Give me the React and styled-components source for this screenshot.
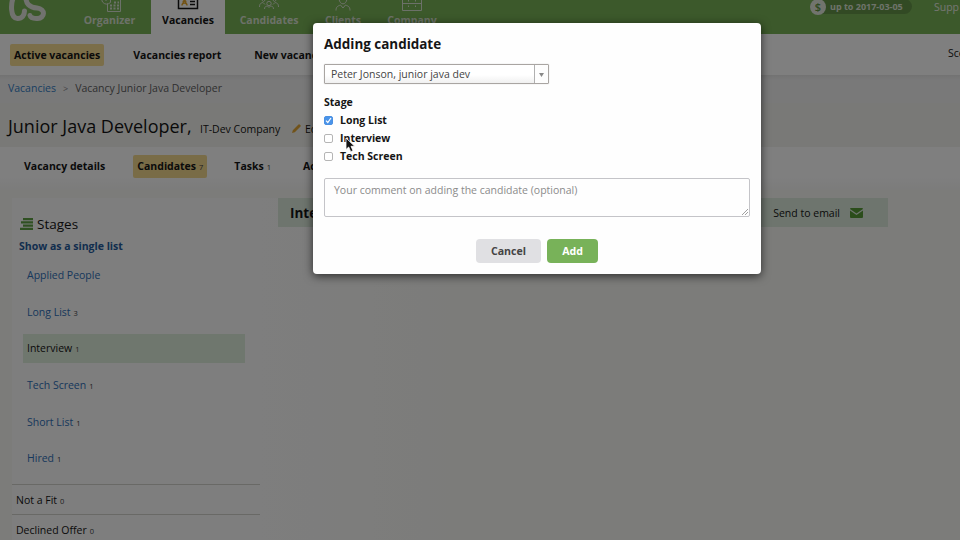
import React from 'react';
import styled, { createGlobalStyle } from 'styled-components';

const Global = createGlobalStyle`
  * { box-sizing: border-box; }
  html, body { margin: 0; padding: 0; }
  body {
    width: 960px; height: 540px; overflow: hidden;
    font-family: "Open Sans", "Noto Sans", sans-serif;
    font-size: 10.5px; color: #151515; background: #f8f8f4;
  }
`;

const Page = styled.div`
  position: relative; width: 960px; height: 540px; overflow: hidden;
  display: flex; flex-direction: column; white-space: nowrap;
`;

const Header = styled.header`
  display: flex; flex: none; height: 34px; background: #79b356; color: #e9ece4;
`;
const Logo = styled.svg`
  flex: none; width: 68px; height: 34px;
`;
const Tab = styled.div`
  flex: none; display: flex; flex-direction: column; align-items: center;
  width: ${p => p.$w}px; height: 34px; font-weight: 700; line-height: 16px;
  background: ${p => (p.$active ? '#ffffff' : 'transparent')};
  color: ${p => (p.$active ? '#151515' : '#d9e2d2')};
  & > svg { display: block; flex: none; width: 24px; height: 12px; overflow: hidden; }
`;
const Paid = styled.div`
  display: flex; align-items: center; align-self: flex-start; height: 15px;
  width: 102px; margin: -1px 0 0 359px; border-radius: 8px;
  background: #659549; color: #dde5d6; font-size: 9px; font-weight: 700; gap: 4px;
`;
const Coin = styled.span`
  width: 16px; height: 16px; border-radius: 50%; background: #e2e8dd; color: #5d923f;
  font-size: 11px; font-weight: 600; line-height: 16px; text-align: center;
`;
const Support = styled.span`
  margin-left: 22px; line-height: 14px;
`;

const SubNav = styled.nav`
  display: flex; flex: none; align-items: center; height: 41px; padding-left: 10px;
  background: #ffffff; font-weight: 700;
`;
const SubItem = styled.span`
  height: 22px; line-height: 22px; padding: 0 4px; margin-right: ${p => p.$gap || 0}px;
  border-radius: 2px; background: ${p => (p.$active ? '#f6dc93' : 'transparent')};
`;
const SubLink = styled.span`
  margin: -3px -5px 0 auto; font-weight: 400;
`;
const Crumbs = styled.div`
  display: flex; flex: none; height: 28px; padding: 0 0 0 8px; line-height: 27px;
  background: linear-gradient(#e6e6e6, #f2f2f3 5px); color: #5f5f5f; gap: 7px;
`;
const Link = styled.a`
  color: #357fc4;
`;
const Angle = styled.span`
  font-size: 9px; color: #8a8a8a;
`;
const TitleBar = styled.div`
  display: flex; flex: none; align-items: baseline; height: 44px; padding-left: 8px;
  background: #f3f3ee; line-height: 46px;
`;
const Title = styled.h1`
  margin: 0; font-size: 18px; font-weight: 400; width: 192px; line-height: 46px;
`;
const Company = styled.span`
  width: 92px;
`;
const Edit = styled.span`
  display: flex; align-items: center; gap: 4px;
  & > svg { width: 9px; height: 9px; }
`;
const Tabs = styled.div`
  display: flex; flex: none; align-items: center; height: 43px; padding: 0 0 4px 20px;
  background: linear-gradient(#fefeff 70%, #f8f8f6);
`;
const DetailTab = styled.span`
  height: 23px; line-height: 23px; padding: 0 4px; font-weight: 700; border-radius: 2px;
  margin-right: ${p => p.$gap}px;
  background: ${p => (p.$active ? '#f3d98f' : 'transparent')};
`;
const Count = styled.small`
  margin-left: 3px; font-size: 7.5px; font-weight: 400; color: #3c3c3c;
`;

const Body = styled.div`
  display: flex; flex: 1; padding: 8px 0 0 12px;
`;
const Side = styled.aside`
  width: 248px; padding-top: 16px; background: #fcfcfc;
`;
const SideTitle = styled.h2`
  display: flex; align-items: center; gap: 4px; margin: 0 0 0 8px;
  font-size: 13.5px; font-weight: 400; line-height: 20px;
  & > svg { width: 13px; height: 12px; }
`;
const Single = styled.a`
  display: block; margin: 4px 0 7px 7px; line-height: 16px; font-weight: 700; color: #255b9c;
`;
const StageList = styled.div`
  padding-bottom: 3px;
`;
const Stage = styled.div`
  height: 29px; margin: 0 15px 7.7px 11px; padding-left: 4px; line-height: 29px;
  color: ${p => (p.$active ? '#151515' : '#2f70b8')};
  background: ${p => (p.$active ? '#dfeedd' : 'transparent')};
`;
const Closed = styled.div`
  height: 30px; padding-left: 4px; line-height: 30px; border-top: 1px solid #d2d2cc;
`;
const Main = styled.main`
  display: flex; flex: 1; padding-left: 18px; background: linear-gradient(90deg, #fcfcfc, #f8f8f4 220px);
`;
const StageHead = styled.div`
  display: flex; align-items: center; width: 610px; height: 29px; padding: 0 25px 0 12px;
  background: #dcebdd;
  & > svg { width: 13px; height: 10px; margin-left: 10px; }
`;
const HeadName = styled.strong`
  flex: 1; font-size: 13.5px;
`;

const Shade = styled.div`
  position: absolute; inset: 0; background: rgba(0, 0, 0, 0.5);
`;
const Dialog = styled.section`
  position: absolute; left: 313px; top: 23px; width: 448px; height: 251px;
  display: flex; flex-direction: column; padding: 11px 11px 0; border-radius: 4px;
  background: #fefefe; box-shadow: 0 2px 10px rgba(0, 0, 0, 0.65);
`;
const DialogTitle = styled.h3`
  margin: 0 0 10px; font-size: 13.45px; line-height: 20px;
`;
const Select = styled.div`
  display: flex; width: 225px; height: 20px; border: 1px solid #a9a5a2; border-radius: 1px;
  background: linear-gradient(#fff 55%, #f0f0f0); color: #444; line-height: 19px;
  box-shadow: 0 0 1px rgba(0, 0, 0, 0.3);
`;
const SelectText = styled.span`
  flex: 1; padding-left: 6px;
`;
const Arrow = styled.span`
  display: flex; align-items: center; justify-content: center; width: 14px;
  border-left: 1px solid #b0b0b0; background: #fdfdfd;
  & > svg { width: 5px; height: 5px; }
`;
const FieldName = styled.div`
  margin: 10px 0 1px; line-height: 16px; font-weight: 700;
`;
const Option = styled.label`
  display: flex; align-items: center; gap: 7px; height: 18px; font-weight: 700; line-height: 16px; padding-bottom: 1px;
`;
const Check = styled.span`
  display: flex; width: 9px; height: 9px; margin-top: 2px; border-radius: 2px;
  border: 1px solid ${p => (p.$on ? '#4a90e2' : '#b5b5b5')};
  background: ${p => (p.$on ? '#4a94ea' : '#fff')};
  & > svg { width: 7px; height: 7px; }
`;
const Comment = styled.div`
  display: flex; flex: none; justify-content: space-between; height: 39px; margin-top: 13px;
  padding-left: 9px; border: 1px solid #c4c4c8; border-radius: 2px; color: #8b8b8b; line-height: 22px;
  & > svg { align-self: flex-end; width: 8px; height: 8px; }
`;
const Actions = styled.div`
  display: flex; gap: 6px; margin: 22px 0 0 152px;
`;
const Button = styled.button`
  width: ${p => p.$w}px; height: 24px; padding: 0; border: 0; border-radius: 4px;
  font: 700 10.6px/24px "Open Sans", sans-serif;
  color: ${p => (p.$primary ? '#fff' : '#444')};
  background: ${p => (p.$primary ? '#78b259' : '#e0e0e3')};
`;
const Pointer = styled.svg`
  position: absolute; left: 345px; top: 137px; width: 11px; height: 16px;
`;

const stages = [
  ['Applied People'], ['Long List', 3], ['Interview', 1], ['Tech Screen', 1], ['Short List', 1], ['Hired', 1],
];

const Lines = ({ children }) => (
  <svg viewBox="0 0 24 12" fill="none" stroke="currentColor" strokeWidth="1">{children}</svg>
);

export default function App() {
  return (
    <Page>
      <Global />
      <Header>
        <Logo viewBox="0 0 68 34" fill="none" stroke="#e2e5de" strokeWidth="5" strokeLinecap="round">
          <path d="M14-4C10.500 3 10 18 17.500 18.500C22 18.700 24.500 15 24.500 11" />
          <path d="M26-5C25 4 30 7.500 37 8C46 9 45 18 37.500 18.500C33.500 18.700 30.500 17.500 30 15.500" />
        </Logo>
        <Tab $w={83}>
          <Lines>
            <path d="M9.500 3.500V11.500H22.500V0M12.500-1V2.500Q8 6 4.500 2L3.500-1M8-2V1" />
            <path d="M12 5.500H21M12 8.500H21M16 2.500H21" strokeDasharray="2 1.500" strokeWidth="2" />
          </Lines>
          Organizer
        </Tab>
        <Tab $w={74} $active>
          <Lines>
            <path d="M2.500-2V8.500H21.500V-2" strokeWidth="1.500" />
            <path d="M14 1.500H19M14 4.500H19" strokeWidth="1.300" />
            <path d="M6 5.500C6 2 11 2 11 5.500M6.500-1L10.500 2.500M10.500-1L6.500 2.500" stroke="#e4a62c" strokeWidth="1.500" />
          </Lines>
          Vacancies
        </Tab>
        <Tab $w={88}>
          <Lines>
            <path d="M2.500 7C2.500 3.500 4 3 6 2.500L8 4.500M4.500-1Q6.500 4 8.500-1M21.500 7C21.500 3.500 20 3 18 2.500L16 4.500M15.500-1Q17.500 4 19.500-1" />
            <circle cx="12" cy="3.500" r="2.200" />
            <path d="M7.500 9C7.500 6.500 9 6.300 10.500 6L12 7.500L13.500 6C15 6.300 16.500 6.500 16.500 9" />
          </Lines>
          Candidates
        </Tab>
        <Tab $w={60}>
          <Lines>
            <path d="M8-1C9 5.500 15 5.500 16-1M5 10.500C5 6.500 7 6 9.500 5L12 8L14.500 5C17 6 19 6.500 19 10.500" />
          </Lines>
          Clients
        </Tab>
        <Tab $w={78}>
          <Lines>
            <path d="M2.500-1V10.500H21.500V-1M2.500 3.500H21.500M8.500 0V1.500M15.500 0V1.500M8.500 7V5.500M15.500 7V5.500" />
          </Lines>
          Company
        </Tab>
        <Paid><Coin>$</Coin>up to 2017-03-05</Paid>
        <Support>Supp</Support>
      </Header>
      <SubNav>
        <SubItem $active $gap={25}>Active vacancies</SubItem>
        <SubItem $gap={25}>Vacancies report</SubItem>
        <SubItem>New vacancy</SubItem>
        <SubLink>Sco</SubLink>
      </SubNav>
      <Crumbs>
        <Link>Vacancies</Link><Angle>&gt;</Angle><span>Vacancy Junior Java Developer</span>
      </Crumbs>
      <TitleBar>
        <Title>Junior Java Developer,</Title>
        <Company>IT-Dev Company</Company>
        <Edit>
          <svg viewBox="0 0 9 9" fill="#e3a735"><path d="M0 9L.8 6.200L6.500.5Q7.200-.1 8 .8Q9.200 1.700 8.500 2.500L2.800 8.200Z" /></svg>
          Edit
        </Edit>
      </TitleBar>
      <Tabs>
        <DetailTab $gap={24}>Vacancy details</DetailTab>
        <DetailTab $active $gap={23}>Candidates<Count>7</Count></DetailTab>
        <DetailTab $gap={24}>Tasks<Count>1</Count></DetailTab>
        <DetailTab>Activity</DetailTab>
      </Tabs>
      <Body>
        <Side>
          <SideTitle>
            <svg viewBox="0 0 13 12" stroke="#5fa044" strokeWidth="2.200"><path d="M3 1.200H13M1 4.400H13M3 7.600H13M0 10.800H13" /></svg>
            Stages
          </SideTitle>
          <Single>Show as a single list</Single>
          <StageList>
            {stages.map(([name, n]) => (
              <Stage key={name} $active={name === 'Interview'}>{name}{n && <Count>{n}</Count>}</Stage>
            ))}
          </StageList>
          <Closed>Not a Fit<Count>0</Count></Closed>
          <Closed>Declined Offer<Count>0</Count></Closed>
        </Side>
        <Main>
          <StageHead>
            <HeadName>Interview</HeadName>
            <span>Send to email</span>
            <svg viewBox="0 0 13 10" fill="#579a37"><path d="M0 1Q0 0 1 0H12Q13 0 13 1L6.500 5.500ZM0 2.500L6.500 7L13 2.500V9Q13 10 12 10H1Q0 10 0 9Z" /></svg>
          </StageHead>
        </Main>
      </Body>
      <Shade />
      <Dialog>
        <DialogTitle>Adding candidate</DialogTitle>
        <Select>
          <SelectText>Peter Jonson, junior java dev</SelectText>
          <Arrow><svg viewBox="0 0 5 5" fill="#888"><path d="M0 1H5L2.500 5Z" /></svg></Arrow>
        </Select>
        <FieldName>Stage</FieldName>
        <Option>
          <Check $on><svg viewBox="0 0 7 7" fill="none" stroke="#fff" strokeWidth="1.200"><path d="M1 3.700L2.800 5.500L6 1" /></svg></Check>
          Long List
        </Option>
        <Option><Check />Interview</Option>
        <Option><Check />Tech Screen</Option>
        <Comment>
          Your comment on adding the candidate (optional)
          <svg viewBox="0 0 8 8" stroke="#888" strokeWidth=".8"><path d="M1 7L7 1M4 7L7 4" /></svg>
        </Comment>
        <Actions>
          <Button $w={65}>Cancel</Button>
          <Button $w={51} $primary>Add</Button>
        </Actions>
      </Dialog>
      <Pointer viewBox="0 0 11 16">
        <path d="M1 1V12.500L3.700 10L5.700 14.700L8 13.700L6 9.300H9.700Z" fill="#111" stroke="#fff" strokeWidth=".8" />
      </Pointer>
    </Page>
  );
}
